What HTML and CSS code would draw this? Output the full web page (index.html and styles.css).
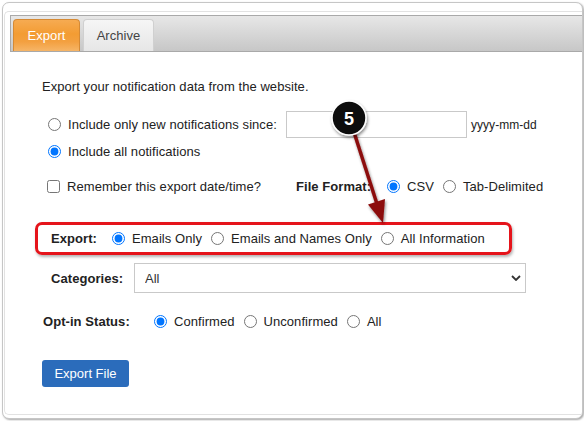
FILE: index.html
```html
<!DOCTYPE html>
<html lang="en">
<head>
<meta charset="utf-8">
<title>Export</title>
<link rel="stylesheet" href="styles.css">
</head>
<body>
<div class="frame">
  <div class="inner">
    <div class="tabbar">
      <div class="tab tab-active">Export</div>
      <div class="tab">Archive</div>
    </div>
    <div class="content">
      <p class="intro">Export your notification data from the website.</p>

      <div class="row row-since">
        <label class="opt"><input type="radio" name="range"><span>Include only new notifications since:</span></label>
        <input type="text" class="date-input">
        <span class="hint">yyyy-mm-dd</span>
      </div>

      <div class="row row-all">
        <label class="opt"><input type="radio" name="range" checked><span>Include all notifications</span></label>
      </div>

      <div class="row row-remember">
        <label class="opt opt-check"><input type="checkbox"><span>Remember this export date/time?</span></label>
        <span class="lbl lbl-format">File Format:</span>
        <label class="opt"><input type="radio" name="format" checked><span>CSV</span></label>
        <label class="opt"><input type="radio" name="format"><span>Tab-Delimited</span></label>
      </div>

      <div class="row row-export">
        <span class="lbl lbl-export">Export:</span>
        <label class="opt"><input type="radio" name="scope" checked><span>Emails Only</span></label>
        <label class="opt"><input type="radio" name="scope"><span>Emails and Names Only</span></label>
        <label class="opt"><input type="radio" name="scope"><span>All Information</span></label>
      </div>

      <div class="row row-categories">
        <span class="lbl lbl-categories">Categories:</span>
        <span class="select-wrap">
          <select class="select"><option>All</option></select>
          <svg class="chevron" width="10" height="6" viewBox="0 0 10 6"><path d="M1 1 L5 5 L9 1" fill="none" stroke="#333" stroke-width="1.8"/></svg>
        </span>
      </div>

      <div class="row row-optin">
        <span class="lbl lbl-optin">Opt-in Status:</span>
        <label class="opt"><input type="radio" name="optin" checked><span>Confirmed</span></label>
        <label class="opt"><input type="radio" name="optin"><span>Unconfirmed</span></label>
        <label class="opt"><input type="radio" name="optin"><span>All</span></label>
      </div>

      <button class="btn" type="button">Export File</button>
    </div>
  </div>
</div>

<svg class="callout" width="584" height="421" viewBox="0 0 584 421">
  <defs>
    <filter id="shadow" x="-30%" y="-30%" width="160%" height="160%">
      <feDropShadow dx="1" dy="2" stdDeviation="1.5" flood-color="#000" flood-opacity="0.45"/>
    </filter>
  </defs>
  <g filter="url(#shadow)">
    <line x1="352" y1="126" x2="377" y2="204" stroke="#8c0d0d" stroke-width="3.5"/>
    <polygon points="383,223 368,204.5 385,199" fill="#8c0d0d"/>
  </g>
  <g filter="url(#shadow)">
    <circle cx="349" cy="118" r="17" fill="#111" stroke="#fff" stroke-width="1.5"/>
  </g>
  <text x="349" y="124.5" text-anchor="middle" class="badge-num">5</text>
</svg>
</body>
</html>
```

FILE: styles.css
```css
html, body {
  margin: 0;
  padding: 0;
  background: #fff;
}

body {
  width: 584px;
  height: 421px;
  overflow: hidden;
  font-family: "Liberation Sans", Arial, sans-serif;
  font-size: 13px;
  color: #222;
}

/* outer rounded panel */
.frame {
  box-sizing: border-box;
  width: 581px;
  height: 417px;
  margin: 2px 0 0 2px;
  border: 1px solid #c6c6c6;
  border-radius: 7px;
  box-shadow: 1px 1px 2px rgba(0, 0, 0, 0.35);
  background: #fff;
}

.inner {
  box-sizing: border-box;
  height: 404px;
  margin: 8px 0 0 1px;
  border-top: 1px solid #e2e2e2;
  border-left: 1px solid #e2e2e2;
  border-bottom: 1px solid #e2e2e2;
  border-radius: 5px 0 0 5px;
}

/* tab strip */
.tabbar {
  box-sizing: border-box;
  height: 37px;
  margin: 3px 0 0 5px;
  padding: 3px 0 0 2px;
  display: flex;
  align-items: flex-start;
  gap: 3px;
  border: 1px solid #a9a9a9;
  border-right: none;
  background: linear-gradient(#e7e7e7, #c7c7c7);
}

.tab {
  box-sizing: border-box;
  height: 32px;
  padding: 0 12px;
  display: flex;
  align-items: center;
  justify-content: center;
  border: 1px solid #d0d0d0;
  border-bottom: none;
  border-radius: 4px 4px 0 0;
  background: linear-gradient(#f6f6f6, #e6e6e6);
  color: #444;
  width: 71px;
  letter-spacing: 0.05px;
}

.tab-active {
  width: 67px;
  border-color: #d58a35;
  background: linear-gradient(#f6ab52 0%, #f39c33 45%, #f3a040 70%, #f6b567 100%);
  color: #fff;
}

/* form body */
.content {
  padding-left: 30px;
  letter-spacing: 0.06px;
}

.intro {
  margin: 27px 0 0 7px;
  line-height: 16px;
}

.row {
  display: flex;
  align-items: center;
  height: 20px;
}

.opt {
  display: inline-flex;
  align-items: center;
  white-space: nowrap;
}

.opt + .opt {
  margin-left: 4px;
}

.opt span {
  padding-left: 4px;
}

.opt input[type="radio"] {
  width: 13px;
  height: 13px;
  margin: 0 3px 0 5px;
}

.opt input[type="checkbox"] {
  width: 13px;
  height: 13px;
  margin: 0 3px 0 4px;
}

.lbl {
  font-weight: bold;
  white-space: nowrap;
}

.row-since {
  height: 27px;
  margin-top: 16px;
  padding-left: 8px;
}

.date-input {
  box-sizing: border-box;
  width: 181px;
  height: 27px;
  margin: 0 0 0 9px;
  padding: 0 6px;
  border: 1px solid #c9c9c9;
  font: inherit;
}

.hint {
  margin-left: 4px;
  font-size: 12px;
}

.row-all {
  margin-top: 3px;
  padding-left: 8px;
}

.row-remember {
  margin-top: 15px;
  padding-left: 8px;
}

.opt-check {
  width: 253px;
}

.lbl-format {
  width: 86px;
}

.row-export {
  box-sizing: border-box;
  width: 477px;
  height: 33px;
  margin-top: 26px;
  padding-left: 13px;
  border: 3px solid #e5141b;
  border-radius: 7px;
  box-shadow: 1px 2px 3px rgba(0, 0, 0, 0.3);
}

.lbl-export {
  width: 56px;
}

.row-categories {
  height: 30px;
  margin-top: 8px;
  padding-left: 16px;
}

.lbl-categories {
  width: 83px;
}

.select-wrap {
  position: relative;
  display: block;
}

.select {
  box-sizing: border-box;
  width: 392px;
  height: 30px;
  padding: 0 0 0 10px;
  border: 1px solid #c9c9c9;
  border-radius: 0;
  background: #fff;
  appearance: none;
  -webkit-appearance: none;
  font: inherit;
  color: #333;
}

.chevron {
  position: absolute;
  right: 5px;
  top: 12px;
}

.row-optin {
  margin-top: 18px;
  padding-left: 8px;
}

.lbl-optin {
  width: 106px;
}

.btn {
  display: block;
  box-sizing: border-box;
  width: 87px;
  height: 27px;
  margin: 29px 0 0 7px;
  padding: 0;
  border: none;
  border-radius: 3px;
  background: #2b6cbb;
  color: #fff;
  font-family: inherit;
  font-size: 13px;
}

/* numbered callout */
.callout {
  position: absolute;
  left: 0;
  top: 0;
  pointer-events: none;
}

.badge-num {
  fill: #fff;
  font-family: "Liberation Sans", Arial, sans-serif;
  font-weight: bold;
  font-size: 18px;
}
```
